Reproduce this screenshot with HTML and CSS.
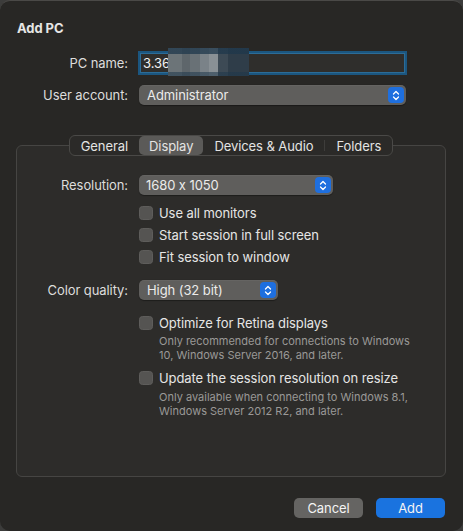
FILE: index.html
```html
<!DOCTYPE html>
<html>
<head>
<meta charset="utf-8">
<link rel="stylesheet" href="styles.css">
</head>
<body>
<div class="window">
  <div class="title">Add PC</div>

  <div class="row row-name">
    <div class="label">PC name:</div>
    <div class="field">
      <span class="field-text">3.36</span>
      <div class="mosaic"></div>
    </div>
  </div>

  <div class="row row-account">
    <div class="label">User account:</div>
    <div class="popup popup-account">
      <span class="popup-text">Administrator</span>
      <span class="stepper">
        <svg width="8" height="11" viewBox="0 0 8 11"><path d="M1.5 4 L4 1.5 L6.5 4 M1.5 7 L4 9.5 L6.5 7" fill="none" stroke="#fff" stroke-width="1.3" stroke-linecap="round" stroke-linejoin="round"/></svg>
      </span>
    </div>
  </div>

  <div class="group">
    <div class="tabs">
      <div class="tab">General</div>
      <div class="tab selected">Display</div>
      <div class="tab sep-right">Devices &amp; Audio</div>
      <div class="tab">Folders</div>
    </div>

    <div class="row row-res">
      <div class="label">Resolution:</div>
      <div class="popup popup-res">
        <span class="popup-text">1680 x 1050</span>
        <span class="stepper">
          <svg width="8" height="11" viewBox="0 0 8 11"><path d="M1.5 4 L4 1.5 L6.5 4 M1.5 7 L4 9.5 L6.5 7" fill="none" stroke="#fff" stroke-width="1.3" stroke-linecap="round" stroke-linejoin="round"/></svg>
        </span>
      </div>
    </div>

    <div class="checks">
      <div class="check"><span class="box"></span><span class="check-text">Use all monitors</span></div>
      <div class="check"><span class="box"></span><span class="check-text">Start session in full screen</span></div>
      <div class="check"><span class="box"></span><span class="check-text">Fit session to window</span></div>
    </div>

    <div class="row row-color">
      <div class="label">Color quality:</div>
      <div class="popup popup-color">
        <span class="popup-text">High (32 bit)</span>
        <span class="stepper">
          <svg width="8" height="11" viewBox="0 0 8 11"><path d="M1.5 4 L4 1.5 L6.5 4 M1.5 7 L4 9.5 L6.5 7" fill="none" stroke="#fff" stroke-width="1.3" stroke-linecap="round" stroke-linejoin="round"/></svg>
        </span>
      </div>
    </div>

    <div class="option option-retina">
      <div class="check"><span class="box"></span><span class="check-text">Optimize for Retina displays</span></div>
      <div class="desc">Only recommended for connections to Windows<br>10, Windows Server 2016, and later.</div>
    </div>

    <div class="option option-resize">
      <div class="check"><span class="box"></span><span class="check-text">Update the session resolution on resize</span></div>
      <div class="desc">Only available when connecting to Windows 8.1,<br>Windows Server 2012 R2, and later.</div>
    </div>
  </div>

  <div class="buttons">
    <div class="btn btn-cancel">Cancel</div>
    <div class="btn btn-add">Add</div>
  </div>
</div>
</body>
</html>
```

FILE: styles.css
```css
html, body {
  margin: 0;
  padding: 0;
  background: #3c3c3b;
}

.window {
  box-sizing: border-box;
  width: 463px;
  height: 531px;
  background: #282725;
  border-radius: 10px;
  border-top: 1px solid #4a4947;
  font-family: "Inter", "Liberation Sans", sans-serif;
  font-size: 13px;
  line-height: 16px;
  letter-spacing: -0.08px;
  font-feature-settings: "calt" 0;
  color: #e2e2e1;
  overflow: hidden;
}

.title {
  padding: 19px 0 0 17px;
  font-weight: 700;
  color: #e6e6e5;
}

.row {
  display: flex;
  align-items: center;
}

.label {
  width: 128px;
  box-sizing: border-box;
  text-align: right;
  margin-right: 11px;
  color: #dedddc;
  flex: none;
}

.row-name {
  margin-top: 17px;
}

.row-name .label {
  margin-right: 12px;
}

.field {
  position: relative;
  box-sizing: border-box;
  width: 265px;
  height: 20px;
  background: #2f2e2c;
  border: 1px solid #2c6c97;
  box-shadow: 0 0 0 2px #1b5680;
  display: flex;
  align-items: center;
  padding-left: 2px;
}

.field-text {
  color: #f2f2f2;
}

.mosaic {
  position: absolute;
  left: 27px;
  top: -6px;
  width: 81px;
  height: 28px;
  background:
    linear-gradient(to bottom, rgba(30, 55, 75, 0.75) 0 6px, rgba(30, 55, 75, 0) 6px 24px, rgba(30, 55, 75, 0.55) 24px 28px),
    linear-gradient(to right, #6c7478 0 14px, #5e666b 14px 22px, #697176 22px 32px, #7a8288 32px 41px, #899095 41px 50px, #3d4a55 50px 60px, #2f3d49 60px 81px);
}

.row-account {
  margin-top: 12px;
}

.popup {
  box-sizing: border-box;
  height: 20px;
  background: #5f5e5c;
  border-radius: 5px;
  box-shadow: 0 0.5px 1px rgba(0, 0, 0, 0.35), inset 0 0.5px 0 rgba(255, 255, 255, 0.08);
  display: flex;
  align-items: center;
  justify-content: space-between;
  padding: 0 2px 0 8px;
  color: #ebebea;
}

.popup-account {
  width: 267px;
}

.popup-res {
  width: 194px;
  padding-left: 7px;
}

.popup-color {
  width: 139px;
  padding-left: 8px;
}

.stepper {
  width: 16px;
  height: 16px;
  border-radius: 4px;
  background: #1e6fdf;
  display: flex;
  align-items: center;
  justify-content: center;
}

.stepper svg {
  display: block;
}

.group {
  box-sizing: border-box;
  margin: 40px 0 0 16px;
  width: 430px;
  height: 332px;
  border: 1px solid #464543;
  border-radius: 6px;
  background: #2d2c2a;
}

.tabs {
  margin: -11px auto 0;
  width: max-content;
  height: 21px;
  box-sizing: border-box;
  border: 1px solid #4a4947;
  border-radius: 6px;
  background: #2b2a28;
  display: flex;
  align-items: stretch;
}

.tab {
  display: flex;
  align-items: center;
  padding: 0 11px;
  color: #e4e4e3;
  border-radius: 5px;
}

.tab.selected {
  background: #5b5a58;
  padding: 0 10px;
}

.tab.sep-right {
  border-right: 1px solid #3e3d3b;
  border-radius: 0;
  margin: 4px 0;
}

.row-res {
  margin-top: 19px;
  margin-left: -17px;
}

.checks {
  margin: 11px 0 0 122px;
  display: flex;
  flex-direction: column;
  gap: 8px;
}

.check {
  display: flex;
  align-items: center;
  height: 14px;
}

.box {
  box-sizing: border-box;
  width: 14px;
  height: 14px;
  border-radius: 3.5px;
  background: #555452;
  border: 0.5px solid #5e5d5b;
  margin-right: 6px;
  flex: none;
}

.check-text {
  color: #e6e6e5;
}

.row-color {
  margin-top: 16px;
  margin-left: -17px;
}

.option {
  margin-left: 122px;
}

.option-retina {
  margin-top: 16px;
}

.option-resize {
  margin-top: 9px;
}

.desc {
  margin: 4px 0 0 20px;
  font-size: 11px;
  line-height: 14px;
  letter-spacing: 0;
  color: #9a9997;
}

.option-resize .desc {
  margin-top: 5px;
}

.buttons {
  display: flex;
  justify-content: flex-end;
  gap: 13px;
  margin: 21px 18px 0 0;
}

.btn {
  width: 69px;
  height: 20px;
  border-radius: 5px;
  display: flex;
  align-items: center;
  justify-content: center;
  color: #f4f4f4;
}

.btn-cancel {
  background: #656462;
}

.btn-add {
  background: #1a73df;
}
```
